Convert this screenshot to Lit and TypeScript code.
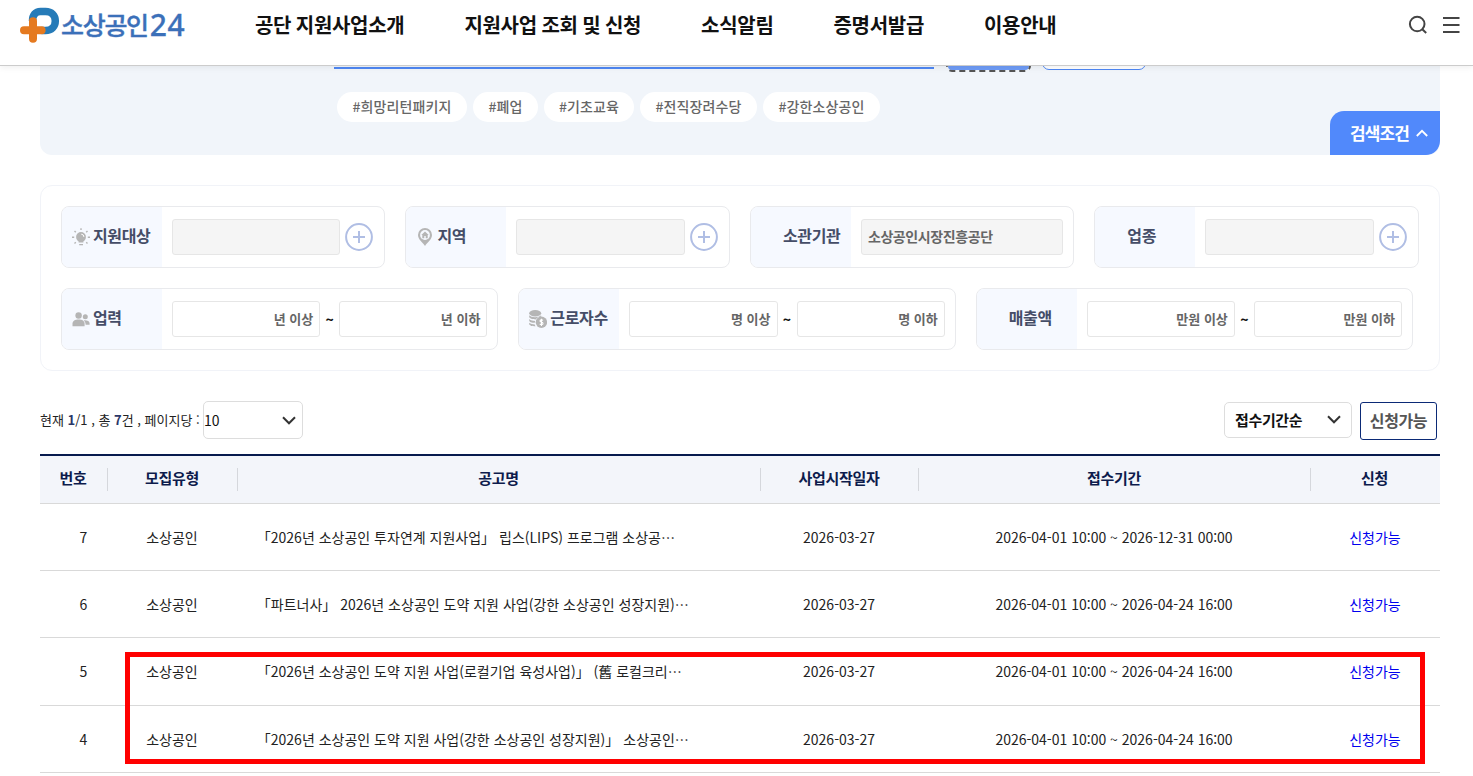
import { LitElement, html, css, svg, nothing } from "lit";
import { customElement } from "lit/decorators.js";

const ICONS: Record<string, unknown> = {
  bulb: svg`<g fill="#b5b5b5" stroke="#b5b5b5"><circle cx="9" cy="9" r="4.9" stroke="none"/><path d="M6.6 12.5h4.8v2H6.6zM7.2 16h3.8v1.2H7.2z" stroke="none"/><path d="M9 .3v1.8M0 9.3h2.2M15.8 9.3H18M2.5 3l1.3 1.3M15.5 3l-1.3 1.3M2.5 15.4l1.3-1.2M15.5 15.4l-1.3-1.2" stroke-width="1.4" fill="none"/><path d="M9.3 6.2a2.7 2.7 0 0 1 2.6 2.7" stroke="#fff" stroke-width="1" fill="none"/></g>`,
  pin: svg`<path d="M9 0a7 7 0 0 0-7 7c0 4.500 4.500 7 7 11 2.500-4 7-6.500 7-11a7 7 0 0 0-7-7z" fill="#b5b5b5"/><circle cx="9" cy="7" r="4.900" fill="#f6f9ff"/><path d="M9 3.400 5.300 6.900h1v3.300h2V8h1.400v2.200h2V6.900h1z" fill="#b5b5b5"/>`,
  people: svg`<g fill="#b5b5b5"><circle cx="6.600" cy="5.500" r="3.200"/><path d="M.5 16.200v-2.400C.5 11 3 9.600 6.600 9.600s6 1.400 6 4.200v2.400z"/><circle cx="13.300" cy="6.700" r="2.500"/><path d="M12.600 10.300c3 0 5 1.100 5 3.200v1.300h-4c0-2-.5-3.300-2-4.300z"/></g>`,
  coins: svg`<g fill="#b5b5b5"><ellipse cx="6.200" cy="3.200" rx="6" ry="3.200"/><path d="M.2 5.200c2 2.600 9.700 2.600 11.900 0v1.600c-3 0-4.600 1.300-5.400 2.600C3.600 9.400.2 8.500.2 6.800zM.2 9c1.500 1.400 3.600 1.900 5.900 1.900l-.3 1.900C3 12.700.2 12 .2 10.400zM.2 12.700c1.500 1.300 3.400 1.700 5.600 1.700.1.700.4 1.300.8 1.900-3.600 0-6.400-.8-6.400-2.200z"/><circle cx="12.400" cy="12.300" r="5.700"/></g><path d="M14 10.400c-.7-.8-3-.8-3 .5s3 1 3 2.500-2.400 1.300-3.200.4M12.450 8.700v7.200" stroke="#fff" stroke-width="1.100" fill="none"/>`,
};

const icon = (name: string) =>
  html`<svg class="icon" width="18" height="18" viewBox="0 0 18 18">${ICONS[name]}</svg>`;

const chevron = html`<svg class="chev" width="14" height="9" viewBox="0 0 14 9"><path d="M1 1.300l6 6 6-6" fill="none" stroke="#333" stroke-width="2"/></svg>`;

const plus = html`<svg class="plus" width="28" height="28" viewBox="0 0 28 28" fill="none" stroke="#b0bee4" stroke-width="2"><circle cx="14" cy="14" r="12.900"/><path d="M14 8v12M8 14h12"/></svg>`;

@customElement("app-root")
export class AppRoot extends LitElement {
  static styles = css`
    :host { display: block; position: relative; height: 776px; overflow: hidden; background: #fff; color: #111;
      font-family: "Noto Sans CJK KR", "Noto Sans", sans-serif; font-size: 14px; line-height: 20px; white-space: nowrap; }
    * { box-sizing: border-box; }
    svg { display: block; flex: none; }
    header { position: relative; z-index: 2; height: 66px; display: flex; align-items: flex-start; background: #fff;
      border-bottom: 1px solid #ccc; box-shadow: 0 2px 6px rgba(0,0,0,.06); padding: 0 13px 0 20px; }
    .logo { display: flex; width: 235px; padding-top: 7px; color: #3b70b9; }
    .logo-text { display: flex; margin-left: 1px; font-size: 25px; font-weight: 500; line-height: 34px; letter-spacing: -1.300px; -webkit-text-stroke: .4px #3b70b9; }
    .logo-num { font-family: "Noto Sans", sans-serif; font-size: 30px; letter-spacing: .6px; line-height: 35px; margin-left: 2px; -webkit-text-stroke: .3px #3b70b9; }
    nav { display: flex; gap: 60px; font-size: 20px; font-weight: 700; line-height: 30px; padding-top: 10px; letter-spacing: -.3px; word-spacing: -.700px; }
    .tools { display: flex; gap: 15px; margin-left: auto; padding-top: 15px; }
    .hero { height: 89px; margin: 0 33px 0 40px; background: #f1f5fa; border-radius: 0 0 12px 12px; overflow: hidden; display: flex; flex-direction: column; }
    .search { height: 6px; flex: none; display: flex; align-items: flex-end; padding-left: 294px; }
    .field { width: 600px; height: 40px; border-bottom: 2px solid #4e87f3; margin: 0 12px 3px 0; }
    .b1 { width: 85px; height: 44px; border: 2px dashed #555; border-radius: 6px; background: #6e9bf5; background-clip: padding-box; margin-right: 11px; }
    .b2 { width: 104px; height: 44px; border: 1px solid #4e87f3; border-radius: 7px; background: #fff; margin-bottom: 2px; }
    .tags { display: flex; gap: 6px; padding: 20px 0 0 297px; }
    .tag { height: 30px; border-radius: 15px; background: #fff; color: #666; line-height: 28px; text-align: center; font-weight: 500; letter-spacing: .100px; }
    .cond { width: 110px; height: 44px; margin: -11px 0 0 auto; background: #5189fb; color: #fff; border-radius: 14px 0 14px 0; display: flex; align-items: center; padding: 0 0 1px 20px; gap: 7px; font-weight: 700; font-size: 17px; letter-spacing: -.900px; }
    .panel { margin: 30px 33px 0 40px; height: 186px; border: 1px solid #f1f3f8; border-radius: 12px; padding: 20px; display: flex; flex-direction: column; gap: 20px; }
    .row { display: flex; gap: 20px; height: 62px; width: 1357.800px; }
    .row.two { width: 1352px; }
    .card { flex: 1 1 0; min-width: 0; display: flex; align-items: center; border: 1px solid #e9eaed; border-radius: 8px; overflow: hidden; padding-right: 10px; }
    .label { width: 100px; align-self: stretch; background: #f6f9ff; display: flex; align-items: center; gap: 3px; padding: 0 0 4px 10px; font-size: 16px; font-weight: 700; letter-spacing: -.350px; color: #454d67; margin-right: 10px; flex: none; }
    .label .icon { margin-top: 4px; }
    .input { flex: 1; height: 36px; border: 1px solid #e6e6e6; border-radius: 3px; line-height: 33px; padding: 0 6px; font-size: 13px; font-weight: 700; color: #666; text-align: right; }
    .input.off { background: #f5f5f5; text-align: left; font-size: 14px; letter-spacing: -.400px; }
    .plus { margin: 0 1px 0 5px; }
    .tilde { width: 19px; text-align: center; font-weight: 700; }
    .bar { display: flex; height: 38px; margin: 30px 36px 0 40px; align-items: flex-start; }
    .info { font-size: 13px; line-height: 38px; width: 163px; color: #222; }
    .info b { color: #2b3768; }
    .sel { display: flex; align-items: center; border: 1px solid #ddd; border-radius: 5px; }
    .sel .chev { margin-left: auto; }
    .per { width: 100px; height: 38px; padding: 0 6px 0 0; }
    .order { width: 128px; height: 36px; padding: 0 10px 1px; margin: 1px 8px 0 auto; font-size: 15px; font-weight: 700; letter-spacing: -.350px; }
    .avail { width: 77px; height: 38px; margin-top: 1px; border: 1px solid #0b2a76; border-radius: 3px; color: #555; font-size: 16px; font-weight: 700; letter-spacing: -.400px; text-align: center; line-height: 34px; }
    .table { margin: 15px 33px 0 40px; }
    .tr { display: grid; grid-template-columns: 68px 130px 523px 158px 392px 129px; height: 67px; border-bottom: 1px solid #d9d9d9; align-items: center; text-align: center; color: #222; }
    .tr > span { padding-right: 2px; }
    .tr.tall { height: 68px; padding-bottom: 1px; }
    .tr.head { height: 50px; background: #f3f5fa; border-top: 2px solid #071a4e; font-size: 15px; font-weight: 700; letter-spacing: -.300px; color: #0d1b4c; }
    .th { height: 23px; line-height: 19px; border-right: 1px solid #d5d7dc; padding-right: 1px; }
    .th:last-child { border: 0; padding-right: 2px; }
    .tr > .num { padding: 0 0 0 19px; }
    .tr > .title { text-align: left; padding-left: 18.800px; }
    .tr > .link { color: #0000ee; padding-right: 1px; }
    .mark { position: absolute; left: 125px; top: 652px; width: 1300px; height: 112px; border: 5px solid #f00; }
  `;

  private tags: [string, number][] = [["#희망리턴패키지", 130], ["#폐업", 65], ["#기초교육", 90], ["#전직장려수당", 117], ["#강한소상공인", 117]];
  private rows = [
    ["7", "「2026년 소상공인 투자연계 지원사업」 립스(LIPS) 프로그램 소상공⋯", "2026-12-31 00:00"],
    ["6", "「파트너사」 2026년 소상공인 도약 지원 사업(강한 소상공인 성장지원)⋯", "2026-04-24 16:00"],
    ["5", "「2026년 소상공인 도약 지원 사업(로컬기업 육성사업)」 (舊 로컬크리⋯", "2026-04-24 16:00"],
    ["4", "「2026년 소상공인 도약 지원 사업(강한 소상공인 성장지원)」 소상공인⋯", "2026-04-24 16:00"],
  ];

  private label(text: string, name: string, indent = 0) {
    return html`<div class="label" style=${indent ? `padding-left:${indent}px` : nothing}>${name ? icon(name) : nothing}<span>${text}</span></div>`;
  }

  private range(text: string, name: string, unit: string, indent = 0) {
    return html`<div class="card">${this.label(text, name, indent)}
      <div class="input">${unit} 이상</div><span class="tilde">~</span><div class="input">${unit} 이하</div></div>`;
  }

  private pick(text: string, name: string, indent = 0) {
    return html`<div class="card">${this.label(text, name, indent)}<div class="input off"></div>${plus}</div>`;
  }

  render() {
    return html`
      <header lang="ko">
        <div class="logo">
          <svg width="40" height="37" viewBox="0 0 40 37" fill="none">
            <path d="M12.500 14c0-6 3-9.500 8-9.500h5c6 0 9.800 4 9.800 9.500s-3.800 9.500-9.800 9.500h-4" stroke="#267bb8" stroke-width="7.500"/>
            <path d="M13 14.200v17.600M4 23.200h17.600" stroke="#e57a20" stroke-width="8" stroke-linecap="round"/>
          </svg>
          <div class="logo-text"><span>소상공인</span><span class="logo-num">24</span></div>
        </div>
        <nav><span>공단 지원사업소개</span><span>지원사업 조회 및 신청</span><span>소식알림</span><span>증명서발급</span><span>이용안내</span></nav>
        <div class="tools">
          <svg width="20" height="20" viewBox="0 0 20 20" fill="none" stroke="#444" stroke-width="2"><circle cx="9.200" cy="9" r="7.300"/><path d="M14.300 14.300l3.900 3.700"/></svg>
          <svg width="17" height="20" viewBox="0 0 17 20" stroke="#444" stroke-width="2"><path d="M0 3h16.500M0 10h16.500M0 17h16.500"/></svg>
        </div>
      </header>
      <section class="hero" lang="ko">
        <div class="search"><div class="field"></div><div class="b1"></div><div class="b2"></div></div>
        <div class="tags">${this.tags.map(([t, w]) => html`<span class="tag" style="width:${w}px">${t}</span>`)}</div>
        <div class="cond"><span>검색조건</span><svg width="12" height="8" viewBox="0 0 12 8"><path d="M.8 7L6 1.800 11.200 7" fill="none" stroke="#fff" stroke-width="1.800"/></svg></div>
      </section>
      <section class="panel" lang="ko">
        <div class="row">
          ${this.pick("지원대상", "bulb")}${this.pick("지역", "pin")}
          <div class="card">${this.label("소관기관", "", 32)}<div class="input off">소상공인시장진흥공단</div></div>
          ${this.pick("업종", "", 32)}
        </div>
        <div class="row two">
          ${this.range("업력", "people", "년")}${this.range("근로자수", "coins", "명")}${this.range("매출액", "", "만원", 32)}
        </div>
      </section>
      <div class="bar" lang="ko">
        <span class="info">현재 <b>1</b>/1 , 총 <b>7</b>건 , 페이지당 :</span>
        <div class="sel per">10${chevron}</div>
        <div class="sel order">접수기간순${chevron}</div>
        <div class="avail">신청가능</div>
      </div>
      <div class="table" lang="ko">
        <div class="tr head">${["번호", "모집유형", "공고명", "사업시작일자", "접수기간", "신청"].map((t) => html`<div class="th">${t}</div>`)}</div>
        ${this.rows.map(([n, t, end], i) => html`<div class="tr ${i === 2 ? "tall" : ""}"><span class="num">${n}</span><span>소상공인</span><span class="title">${t}</span><span>2026-03-27</span><span>2026-04-01 10:00 ~ ${end}</span><span class="link">신청가능</span></div>`)}
      </div>
      <div class="mark"></div>`;
  }
}
